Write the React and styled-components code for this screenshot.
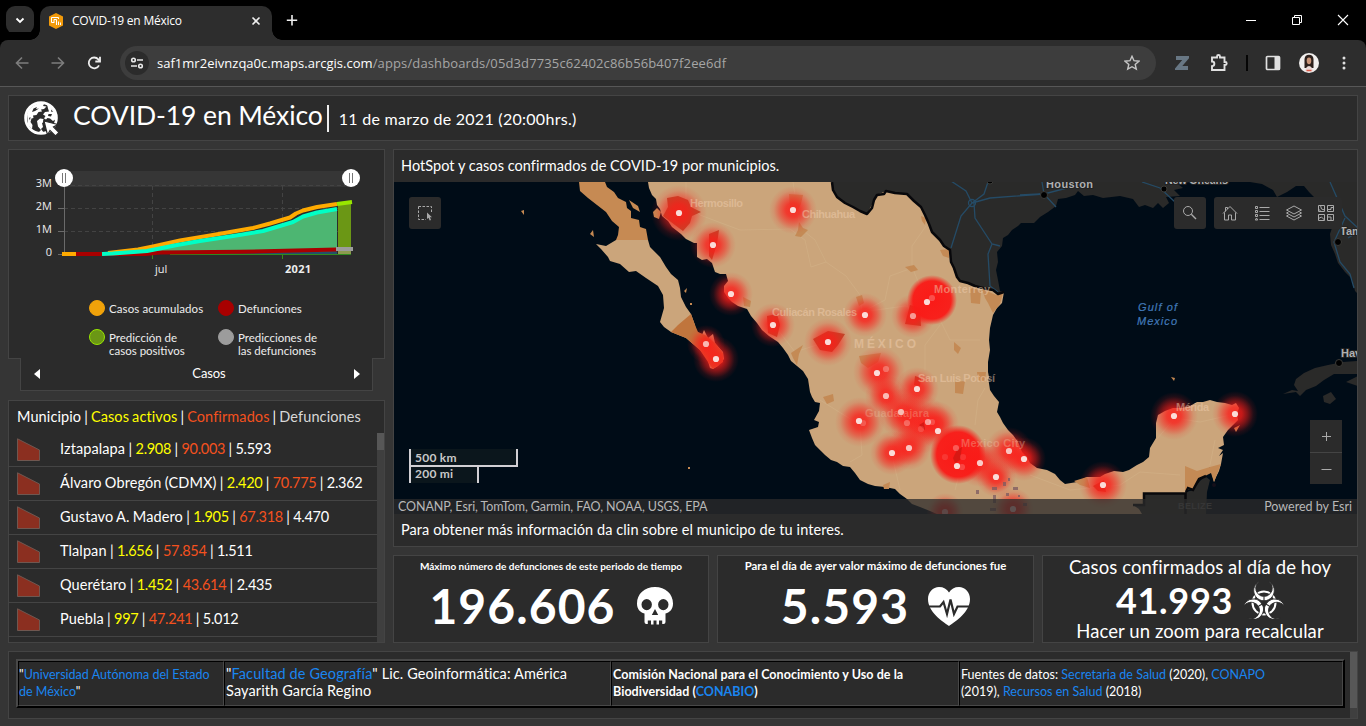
import React from 'react';
import styled, { createGlobalStyle } from 'styled-components';

const Global = createGlobalStyle`
  * { box-sizing: border-box; }
  html, body { margin: 0; padding: 0; background: #353535; overflow: hidden; }
  body { font-family: Lato, "Open Sans", sans-serif; color: #fff; }
  svg { display: block; flex: none; }
`;

const ui = '"Open Sans", "Noto Sans", sans-serif';
const line = '#444';
const panelBg = '#2b2b2b';

const Window = styled.div`
  width: 1366px;
  height: 726px;
  display: flex;
  flex-direction: column;
  background: #353535;
`;

/* ---------- browser chrome ---------- */
const TabStrip = styled.div`
  height: 40px;
  flex: none;
  background: #000;
  display: flex;
  align-items: flex-start;
  padding: 6px 0 0 6px;
`;
const TabSearch = styled.div`
  width: 28px;
  height: 28px;
  border-radius: 9px;
  background: #2d2d2d;
  display: grid;
  place-items: center;
`;
const Tab = styled.div`
  position: relative;
  margin-left: 6px;
  width: 232px;
  height: 34px;
  border-radius: 10px 10px 0 0;
  background: #2d2d2d;
  display: flex;
  align-items: center;
  padding: 0 10px 5px 8px;
  font: 12px/18px ${ui};
  letter-spacing: -0.22px;
  &::before, &::after {
    content: '';
    position: absolute;
    bottom: 0;
    width: 10px;
    height: 10px;
  }
  &::before { left: -10px; background: radial-gradient(circle at 0 0, transparent 9.5px, #2d2d2d 10px); }
  &::after { right: -10px; background: radial-gradient(circle at 100% 0, transparent 9.5px, #2d2d2d 10px); }
`;
const TabTitle = styled.span`
  flex: 1;
  margin-left: 8px;
`;
const NewTab = styled.div`
  margin: 6px 0 0 12px;
`;
const WindowButtons = styled.div`
  margin-left: auto;
  display: flex;
  gap: 34px;
  padding: 8px 17px 0 0;
`;
const Toolbar = styled.div`
  height: 47px;
  flex: none;
  background: #2d2d2d;
  border-bottom: 1px solid #575757;
  border-radius: 8px 8px 0 0;
  display: flex;
  align-items: center;
  padding: 0 14px 0 15px;
  box-shadow: 0 -8px 0 #000;
`;
const NavIcons = styled.div`
  display: flex;
  gap: 22px;
  width: 105px;
`;
const AddressBar = styled.div`
  width: 1036px;
  height: 34px;
  border-radius: 17px;
  background: #3d3d3d;
  display: flex;
  align-items: center;
  padding: 0 16px 0 5px;
  font: 13px/20px ${ui};
`;
const SiteInfo = styled.div`
  width: 24px;
  height: 24px;
  border-radius: 50%;
  background: #2b2b2b;
  display: grid;
  place-items: center;
  margin-right: 8px;
`;
const Url = styled.span`
  flex: 1;
  color: #a6a6a6;
  letter-spacing: ${p => p.$ls}px;
  b { font-weight: 400; color: #fff; letter-spacing: 0.02px; }
`;
const ToolbarActions = styled.div`
  display: flex;
  align-items: center;
  justify-content: space-between;
  flex: 1;
  margin-left: 19px;
`;
const Divider = styled.div`
  width: 2px;
  height: 16px;
  background: #050505;
`;

/* ---------- dashboard ---------- */
const Dashboard = styled.main`
  flex: 1;
  min-height: 0;
  padding: 8px 8px 7px;
  display: flex;
  flex-direction: column;
  gap: 8px;
`;
const Panel = styled.section`
  background: ${panelBg};
  border: 1px solid ${line};
`;
const Header = styled(Panel)`
  height: 46px;
  display: flex;
  align-items: center;
  padding-left: 15px;
`;
const Title = styled.h1`
  margin: 0 0 2px 14px;
  font-weight: 400;
  font-size: 26.5px;
  line-height: 36px;
  letter-spacing: ${p => p.$ls}px;
  display: flex;
  align-items: baseline;
`;
const Caret = styled.span`
  width: 2px;
  height: 27px;
  background: #eee;
  align-self: center;
  margin: 2px 10px 0 4px;
`;
const DateText = styled.span`
  font-size: 16px;
  letter-spacing: ${p => p.$ls}px;
`;
const Body = styled.div`
  flex: none;
  height: 494px;
  display: grid;
  grid-template-columns: 377px 965px;
  gap: 8px;
`;
const Left = styled.div`
  display: flex;
  flex-direction: column;
  min-height: 0;
`;
const ChartPanel = styled(Panel)`
  height: 210px;
`;
const ChartTabs = styled.div`
  margin: -1px 12px 0;
  height: 33px;
  background: ${panelBg};
  border: 1px solid ${line};
  border-top: 0;
  display: flex;
  align-items: center;
  justify-content: space-between;
  padding: 0 12px 2px 13px;
  font-size: 13px;
  letter-spacing: -0.1px;
  > svg { margin-top: 2px; }
  > span { margin-left: 24px; }
`;
const Legend = styled.div`
  display: grid;
  grid-template-columns: 129px 120px;
  grid-auto-rows: 29px;
  margin: 3px 0 0 80px;
`;
const LegendItem = styled.div`
  display: flex;
  gap: 4px;
  font-size: 11.5px;
  line-height: 13px;
  white-space: pre-line;
  letter-spacing: ${p => p.$ls || 0}px;
  color: #eee;
  > span { padding-top: 2px; }
`;
const Dot = styled.i`
  width: 16px;
  height: 16px;
  flex: none;
  border-radius: 50%;
  background: ${p => p.$c};
  border: 1px solid ${p => p.$b || p.$c};
`;
const ListPanel = styled(Panel)`
  margin-top: 9px;
  height: 243px;
  overflow: hidden;
`;
const ListHead = styled.div`
  height: 32px;
  line-height: 31px;
  padding-left: 8px;
  font-size: 14.5px;
  white-space: nowrap;
  letter-spacing: 0.1px;
  word-spacing: -0.8px;
`;
const ListBody = styled.div`
  display: flex;
  height: 209px;
`;
const Rows = styled.div`
  flex: 1;
  min-width: 0;
  overflow: hidden;
`;
const Row = styled.div`
  height: 34px;
  border-bottom: 1px solid ${line};
  display: flex;
  align-items: center;
  padding: 0 0 2px 8px;
  font-size: 14.5px;
  white-space: nowrap;
  letter-spacing: 0.1px;
  word-spacing: -0.5px;
  svg { margin: 2px 20px 0 0; }
`;
const Mark = styled.span`
  color: ${p => p.$c};
`;
const Num = styled(Mark)`
  letter-spacing: -0.3px;
`;
const ScrollTrack = styled.div`
  width: 7px;
  background: #3f3f3f;
`;
const ScrollThumb = styled.div`
  height: ${p => p.$h}px;
  background: #575757;
`;

const Right = styled.div`
  display: flex;
  flex-direction: column;
  gap: 8px;
`;
const MapPanel = styled(Panel)`
  height: 398px;
`;
const MapCaption = styled.div`
  height: 32px;
  line-height: 31px;
  padding-left: 7px;
  font-size: 14.5px;
  letter-spacing: ${p => p.$ls}px;
`;
const MapView = styled.div`
  position: relative;
  height: 332px;
  overflow: hidden;
  background: #000c17;
`;
const MapButtons = styled.div`
  position: absolute;
  top: 15px;
  ${p => (p.$left !== undefined ? `left: ${p.$left}px;` : `right: ${p.$right}px;`)}
  height: 32px;
  display: flex;
  border-radius: 3px;
  background: #2b2b2b;
`;
const MapButton = styled.div`
  width: 32px;
  height: 32px;
  display: grid;
  place-items: center;
`;
const ZoomControl = styled.div`
  position: absolute;
  right: 15px;
  bottom: 30px;
  background: #2b2b2b;
  > div + div { border-top: 1px solid #444; }
`;
const ScaleBar = styled.div`
  position: absolute;
  left: 15px;
  bottom: 31px;
  font-size: 12px;
  font-weight: 700;
  letter-spacing: 0.25px;
  color: #c8c8c8;
`;
const ScaleLine = styled.div`
  width: ${p => p.$w}px;
  height: ${p => p.$h}px;
  line-height: 17px;
  padding-left: 4px;
  background: #0b161c;
  border: 2px solid #d2d0d4;
  border-top: 0;
  ${p => p.$last && 'border-bottom: 0; line-height: 14px;'}
`;
const Attribution = styled.div`
  position: absolute;
  left: 0;
  right: 0;
  bottom: 0;
  height: 15px;
  line-height: 15px;
  padding: 0 5px 0 4px;
  display: flex;
  justify-content: space-between;
  font-size: 12.5px;
  color: #b8b8b8;
  background: rgba(43, 43, 43, 0.76);
  > span:first-child { letter-spacing: -0.09px; }
`;
const Indicators = styled.div`
  display: grid;
  grid-template-columns: 316px 317px 316px;
  gap: 8px;
  height: 88px;
`;
const Indicator = styled(Panel)`
  display: flex;
  flex-direction: column;
  align-items: center;
  white-space: nowrap;
`;
const SmallTitle = styled.div`
  height: 19px;
  line-height: 20px;
  font-size: ${p => p.$size}px;
  font-weight: 700;
`;
const BigTitle = styled.div`
  height: ${p => p.$h}px;
  line-height: ${p => p.$h}px;
  font-size: 18.5px;
  letter-spacing: 0.08px;
`;
const Value = styled.div`
  display: flex;
  align-items: center;
  gap: ${p => p.$gap}px;
  height: ${p => p.$h}px;
  font-size: ${p => p.$size}px;
  line-height: 1;
  font-weight: 700;
  letter-spacing: ${p => p.$ls}px;
`;

const Footer = styled(Panel)`
  height: 68px;
  display: flex;
  justify-content: space-between;
`;
const Credits = styled.div`
  margin: 7px 0 0 7px;
  width: 1329px;
  height: 49px;
  border: 2px solid;
  border-color: #484848 #000 #000 #484848;
  display: grid;
  grid-template-columns: 206px 387px 348px 384px;
`;
const Credit = styled.div`
  border: 1px solid;
  border-color: #000 #484848 #484848 #000;
  padding: ${p => p.$top || 4}px 0 0 ${p => p.$left || 0}px;
  font-size: ${p => p.$size || 12.5}px;
  font-weight: ${p => (p.$bold ? 700 : 400)};
  line-height: 17px;
  white-space: pre;
  letter-spacing: ${p => p.$ls || 0}px;
`;
const Link = styled.a`
  color: #1a85f0;
`;

/* ---------- icons ---------- */
const S = ({ w = 16, h = w, vb, c = '#d6d6d6', sw = 1.5, children }) => (
  <svg width={w} height={h} viewBox={vb || `0 0 ${w} ${h}`} fill="none" stroke={c} strokeWidth={sw}>{children}</svg>
);

const Globe = () => (
  <svg width="35" height="35" viewBox="0 0 35 35">
    <circle cx="17" cy="17" r="15.4" fill="none" stroke="#fff" strokeWidth="2.800" />
    <g fill="#fff">
      <path d="M3 13 C5 7 10 3 16 2.500 L20 3 L19 5 L22.500 5.500 L20 8 L17 8.500 L18 10.500 L14.500 11 L12.500 14 L9 14.500 L9.500 17 L7.500 17.500 L6.500 21 L8.500 24 L8 28 L4 24 Z" />
      <path d="M23 3 L27 6 L31 12 L32 18 L29 20 L26 17.500 L23.500 17 L22 18.500 L20 17.500 L21.500 15 L19 13.500 L21 11 L25 10.500 L24 7.500 Z" />
      <path d="M13 20 L16 17.500 L19.500 18 L19 21.500 L18 22 L19 26 L17 28 L20 32 L14 32 L17 29 L14 25.500 Z" />
    </g>
    <path d="M9.500 7.500 L13 6 L12 8 L15 7.500 L11 10 L8 11 Z M5 17 L6.500 16 L6 19.500 Z M24.500 13 L28 13 L27 15.500 L24 15 Z M27.500 8.500 L29 11 L27 10.500 Z" fill="#2b2b2b" />
    <path d="M20 20 L34 23.500 L29.500 26 L35 31.500 L31.500 35 L26 29.400 L23.500 34 Z" fill="#fff" stroke="#2b2b2b" strokeWidth="1.200" />
  </svg>
);

const Skull = () => (
  <svg width="36" height="38" viewBox="0 0 36 38">
    <path fill="#fff" fillRule="evenodd" d="M18 0 C28.500 0 36 7 36 16.500 C36 22 33 25.500 28.500 26.500 L28.500 35 Q28.500 37 26.500 37 L25.200 37 L25.200 33.500 L22 33.500 L22 37.500 L19.500 37.500 L19.500 33.500 L16.500 33.500 L16.500 37.500 L14 37.500 L14 33.500 L10.800 33.500 L10.800 37 L9.500 37 Q7.500 37 7.500 35 L7.500 26.500 C3 25.500 0 22 0 16.500 C0 7 7.500 0 18 0 Z M9.700 12 A5.200 5.600 0 1 0 9.700 23.200 A5.200 5.600 0 1 0 9.700 12 Z M26.300 12 A5.200 5.600 0 1 0 26.300 23.200 A5.200 5.600 0 1 0 26.300 12 Z M18 22 L14.800 28 L21.200 28 Z" />
  </svg>
);

const HeartPulse = () => (
  <svg width="42" height="39" viewBox="0 0 42 39">
    <path fill="#fff" d="M21 39 C14 34 0 25 0 12 C0 5 5 0 11 0 C15.500 0 19 2 21 5.500 C23 2 26.500 0 31 0 C37 0 42 5 42 12 C42 25 28 34 21 39 Z" />
    <path d="M0 19.500 H12 L15.500 15 L19 27 L22.500 12.500 L26 27 L29.500 19.500 H42" fill="none" stroke="#2b2b2b" strokeWidth="2.200" />
  </svg>
);

const Biohazard = () => (
  <svg width="40" height="38" viewBox="0 0 40 38">
    <circle cx="20" cy="22" r="11.500" fill="none" stroke="#fff" strokeWidth="2" />
    {[0, 120, 240].map(a => (
      <path
        key={a}
        transform={`rotate(${a} 20 22)`}
        d="M15 0.500 A10.300 10.300 0 1 0 25 0.500 A8.300 8.300 0 1 1 15 0.500 Z"
        fill="#fff"
        stroke="#2b2b2b"
        strokeWidth="0.900"
      />
    ))}
    <circle cx="20" cy="22" r="2.300" fill="#2b2b2b" />
    {[0, 120, 240].map(a => (
      <path key={a} transform={`rotate(${a} 20 22)`} d="M20 22V16" stroke="#2b2b2b" strokeWidth="1.100" />
    ))}
  </svg>
);

/* ---------- chart ---------- */
const Chart = () => (
  <svg width="375" height="147" viewBox="9 150 375 147" fontFamily="Open Sans, sans-serif" fontSize="11" fill="#eee">
    <rect x="64" y="171" width="287" height="16" fill="#363636" />
    <g stroke="#434343" strokeDasharray="4 3">
      <path d="M64 185.500H351M64 208.500H351M64 231.500H351M152.500 186V254M282.500 186V254" />
    </g>
    <path d="M64.500 186V254M58 208.500H65M58 231.500H65M58 254.500H65" stroke="#6a6a6a" fill="none" />
    <path d="M152.500 254V259M282.500 254V259" stroke="#3a8a1a" />
    <path d="M102 254 L113 253 L147 251 L177 245 L200 241 L233 236 L263 231 L293 222 L310 214 L337 209 V254 Z" fill="#4db672" />
    <path d="M338 204 L351 202 V254 H338 Z" fill="#6b9715" />
    <path d="M338 249 H351 V254 H338 Z" fill="#8c9a4f" />
    <path d="M190 254 L263 252.500 L337 251 V254.500 H190Z" fill="#24506a" />
    <path d="M170 254.500 H351" stroke="#2f8a1e" />
    <g fill="none" strokeWidth="4" strokeLinejoin="round">
      <path d="M62 254 H78" stroke="#ffaa00" />
      <path d="M108 253 L138 249.500 L153 246.500 L180 240.500 L213 235 L253 228 L270 223.500 L290 217.500 L296 213.500 L303 210.500 L317 207 L337 204" stroke="#ffaa00" />
      <path d="M76 254 H145 L160 252.500 L240 251.800 L337 249.500" stroke="#a80000" />
      <path d="M102 254 L113 253.500 L147 251 L177 245 L200 241 L233 236 L263 231 L293 222 L303 216.500 L317 212.500 L337 209" stroke="#00ffc5" />
      <path d="M337 204 L352 202" stroke="#98e600" />
      <path d="M336 249 H353" stroke="#9c9c9c" />
    </g>
    <g textAnchor="end">
      <text x="52" y="187">3M</text>
      <text x="52" y="210">2M</text>
      <text x="52" y="233">1M</text>
      <text x="52" y="256">0</text>
    </g>
    <text x="155" y="273">jul</text>
    <text x="285" y="273" fontWeight="700" textLength="26">2021</text>
    {[64, 351].map(x => (
      <g key={x}>
        <circle cx={x} cy="178" r="9" fill="#fff" />
        <path d={`M${x - 1.5} 173V183M${x + 1.5} 173V183`} stroke="#777" />
      </g>
    ))}
  </svg>
);

/* ---------- map ---------- */
const usBorder = '832 182 L833 190 L837 197 L845 203 L853 207 L860 211 L867 214 L872 208 L874 200 L877 195 L884 194 L886 191 L895 193 L907 194 L914 201 L921 207 L925 215 L929 224 L932 232 L940 240 L944 246 L950 250 L951 262 L954 268 L957 277 L960 281 L968 283 L975 286 L987 289 L993 290 L998 294 L1004 292';
const mainland = 'M648 182 L649 188 L652 195 L656 199 L657 205 L660 209 L662 216 L668 221 L672 227 L681 234 L686 239 L694 243 L697 243 L697 257 L702 260 L707 259 L712 263 L715 272 L720 274 L726 274 L728 281 L724 286 L724 292 L728 298 L732 302 L738 306 L747 309 L751 316 L757 323 L762 330 L769 336 L778 342 L783 348 L788 355 L791 361 L797 366 L803 371 L808 379 L810 392 L812 397 L815 402 L820 403 L819 411 L814 420 L819 422 L818 427 L809 430 L812 438 L815 445 L821 451 L825 455 L831 460 L837 462 L843 466 L850 467 L855 473 L860 480 L868 484 L875 486 L885 487 L895 489 L900 494 L907 499 L912 504 L920 507 L930 511 L937 514 L1142 514 L1139 509 L1133 505 L1144 505 L1144 493 L1185 493 L1187 488 L1193 490 L1197 484 L1199 478 L1205 476 L1210 467 L1212 474 L1214 482 L1216 477 L1219 471 L1221 464 L1223 453 L1219 456 L1223 450 L1218 448 L1224 445 L1223 437 L1228 430 L1233 425 L1238 420 L1237 414 L1239 408 L1236 403 L1232 405 L1225 403 L1217 402 L1210 400 L1203 402 L1197 402 L1190 406 L1182 408 L1173 408 L1165 411 L1158 415 L1156 423 L1156 438 L1150 448 L1149 457 L1143 462 L1137 465 L1129 470 L1123 472 L1114 471 L1105 474 L1100 477 L1087 477 L1077 482 L1065 484 L1060 480 L1055 474 L1047 470 L1037 468 L1030 463 L1027 457 L1022 452 L1018 442 L1013 435 L1008 430 L1003 423 L1000 417 L997 412 L999 402 L994 396 L990 390 L988 377 L990 382 L988 372 L988 362 L990 350 L989 340 L990 328 L993 315 L997 308 L1002 303 L1004 292 L998 294 L993 290 L975 286 L960 281 L957 277 L951 262 L950 250 L944 246 L932 232 L929 224 L921 207 L907 194 L886 191 L877 195 L867 214 L845 203 L837 197 L833 190 L832 182 Z';

const spots = [
  [679, 213, 28], [713, 245, 23], [793, 210, 24], [731, 294, 22], [773, 325, 22], [828, 342, 24],
  [865, 315, 22], [913, 316, 22], [706, 344, 19], [716, 359, 23], [879, 372, 26], [917, 389, 22],
  [886, 396, 21], [903, 413, 25], [920, 424, 30], [936, 424, 23], [860, 422, 25], [892, 453, 22], [909, 448, 22],
  [980, 463, 24], [1009, 451, 24], [1024, 459, 22], [996, 477, 20], [1013, 509, 21], [945, 512, 19],
  [1174, 416, 24], [1235, 414, 23], [1103, 485, 24],
];
const dots = [
  [679, 213], [713, 245], [793, 210], [731, 294], [773, 325], [828, 342], [865, 315], [913, 316, 0.6], [927, 302],
  [932, 298, 0.25], [706, 344, 0.75], [716, 359], [877, 373], [886, 369, 0.3], [917, 389], [886, 396, 0.75],
  [901, 412, 0.75], [907, 423, 0.3], [921, 429, 0.15], [928, 422, 0.6], [932, 422, 0.2], [938, 431], [859, 421],
  [863, 423, 0.2], [956, 448, 0.3], [945, 457, 0.12], [963, 457, 0.12], [957, 466], [962, 467, 0.2], [980, 463, 0.85],
  [892, 453], [909, 448, 0.8], [1009, 451, 0.8], [1024, 459], [996, 477], [1013, 509, 0.8], [945, 512, 0.6],
  [1174, 416], [1235, 414], [1103, 485],
];

const MapDrawing = () => (
  <svg width="963" height="332" viewBox="394 182 963 332" fontFamily="Liberation Sans, Arial, sans-serif">
    <defs>
      <radialGradient id="heat">
        <stop offset="0" stopColor="#fb1d19" stopOpacity="0.88" />
        <stop offset="0.3" stopColor="#fb1d19" stopOpacity="0.78" />
        <stop offset="0.55" stopColor="#fb1d19" stopOpacity="0.48" />
        <stop offset="0.8" stopColor="#fb1d19" stopOpacity="0.13" />
        <stop offset="1" stopColor="#fb1d19" stopOpacity="0" />
      </radialGradient>
      <radialGradient id="core">
        <stop offset="0" stopColor="#fa1a17" />
        <stop offset="0.76" stopColor="#fa1a17" stopOpacity="0.95" />
        <stop offset="1" stopColor="#fa1a17" stopOpacity="0" />
      </radialGradient>
    </defs>
    {/* neighbouring countries */}
    <g fill="#2a2a29">
      <path d={`M${usBorder} L1000 291 L998 280 L996 270 L998 262 L997 252 L1002 246 L1003 238 L1008 235 L1012 230 L1018 226 L1021 223 L1034 223 L1040 217 L1048 212 L1056 206 L1058 199 L1066 198 L1075 195 L1078 191 L1084 196 L1093 195 L1103 198 L1120 196 L1133 199 L1139 207 L1145 205 L1153 208 L1158 203 L1163 208 L1169 203 L1166 197 L1180 196 L1174 190 L1183 188 L1178 184 L1190 182 Z`} />
      <path d="M1250 182 L1262 184 L1273 190 L1277 197 L1287 192 L1296 186 L1304 186 L1309 192 L1316 199 L1330 208 L1334 222 L1330 234 L1331 245 L1335 254 L1338 263 L1345 272 L1352 279 L1355 291 L1358 294 V182 Z" />
      <path d="M1283 394 L1292 390 L1298 391 L1294 385 L1296 379 L1304 373 L1315 368 L1328 365 L1343 362 L1358 361 V374 L1342 374 L1334 374 L1324 380 L1316 386 L1306 390 L1300 396 L1296 392 Z M1346 382 L1358 376 V386 Z M1323 396 L1331 392 L1336 399 L1330 404 L1324 402 Z" />
      <path d="M1133 505 L1144 505 L1144 493 L1187 492 L1193 490 L1200 481 L1205 476 L1210 480 L1207 492 L1206 514 L1142 514 Z" />
    </g>
    <g fill="none" stroke="#254b66" strokeWidth="1.300">
      <path d="M951 181 L966 191 L972 203 L984 194 L988 182 M972 203 L990 198 L1044 194 L1090 182 M972 203 L961 216 L951 248 M974 203 L975 218 L992 244 L1000 246 M992 244 L988 254 L990 286 L998 292 M1042 182 L1044 194 L1056 207 M1142 182 L1160 188 L1175 202 M1330 182 L1345 216 L1358 228 M1345 218 L1334 242 L1340 262 L1350 274 L1354 288 M1020 195 L1040 194 M1348 238 L1358 232" />
      <circle cx="972" cy="203" r="3.500" />
    </g>

    {/* Mexico */}
    <path d="M648 240 L616 240 L606 246 L596 244 L601 249 L608 257 L610 261 L620 264 L629 272 L636 271 L646 278 L658 286 L663 295 L664 308 L660 322 L664 327 L671 332 L686 338 L700 350 L707 358 L710 368 L713 369 L718 366 L724 359 L723 352 L715 343 L713 334 L708 338 L704 330 L702 335 L696 331 L695 325 L691 314 L686 307 L681 297 L680 288 L678 280 L671 274 L666 267 L660 257 L650 247 Z" fill="#cba57b" />
    <path d="M579 182 L580 191 L588 198 L597 205 L606 212 L612 221 L619 227 L618 235 L616 240 H648 L646 229 L640 227 L639 220 L631 218 L631 211 L627 208 L626 202 L618 198 L614 192 L607 187 L605 182 Z" fill="#c68a53" />
    <path d="M629 200 L638 206 L640 212 L633 208 Z M653 212 L657 208 L661 212 L659 219 L654 217Z M590 234 L593 230 L594 237 Z M521 211 L524 210 L524 215Z M684 291 L687 288 L686 293Z M690 303 H692V305H690Z M1171 377 L1175 378 L1174 381Z M1234 428 L1240 425 L1236 432Z M688 467H690V469H688Z" fill="#c68a53" />
    <path d="M671 332 L678 325 L691 314 L695 325 L698 332 L705 335 L715 343 L723 353 L723 362 L713 369 L708 362 L700 350 L686 338 Z" fill="#c0753d" />
    <path d={mainland} fill="#cba57b" />
    <g fill="none" stroke="#d3b38a" strokeWidth="1" opacity="0.5">
      <path d="M686 182 V200 L700 215 L740 230 L790 229 L805 240 L811 267 L826 262 L815 240 L800 228 L793 182 M826 262 L846 276 L860 295 L862 312 L905 306 L928 312 M930 310 L912 267 L912 246 L926 226 M862 312 L885 300 L890 276 L912 268 M832 340 L795 352 L778 330 M940 320 L950 340 L980 340 M925 370 L925 345 L940 325 M860 425 L820 400 M860 425 L862 455 L850 462 M900 490 L892 455 L920 450 M960 470 L955 490 M975 425 L978 400 L985 388 M1030 475 L1070 490 L1120 485 L1140 472 L1180 475 M1156 440 L1175 418 L1200 422 L1235 414 M1210 465 L1215 440" />
    </g>
    <g fill="#c48a55">
      <path d="M789 194 L803 195 L801 204 L797 212 L790 208 Z M799 222 L803 228 L808 230 L801 237 L795 236 L798 230 Z M905 267 L914 265 L918 270 L911 272 Z M921 216 L926 218 L925 225 L922 221Z M940 250 L949 249 L949 258 L943 256Z M970 287 L981 291 L980 304 L971 303Z M982 289 L996 295 L1003 293 L1000 304 L993 313 L988 303 L985 298Z M954 342 L961 348 L958 354 L954 350Z M791 353 L803 345 L799 354 L797 365 L793 358Z M743 297 L751 301 L750 307 L744 306Z M856 297 L862 295 L864 303 L859 306Z M859 356 L881 353 L878 362 L868 368 L861 363Z M955 382 L965 381 L963 394 L955 393Z M977 372 L986 372 L985 382 L978 380Z M823 397 L833 394 L834 401 L827 404Z M883 485 L890 482 L889 489 L884 489Z M1074 481 L1087 477 L1090 488 L1080 485Z M1185 466 L1197 471 L1210 467 L1221 464 L1214 482 L1211 473 L1205 476 L1199 478 L1193 490 L1185 490Z" />
    </g>
    <g fill="#b0502c">
      <path d="M667 198 L678 196 L688 200 L691 207 L701 212 L692 216 L690 223 L683 231 L675 225 L663 216 L668 207Z M709 234 L719 230 L717 244 L712 260 L709 256Z M813 339 L828 331 L845 334 L838 345 L832 352 L820 350Z M767 316 L777 314 L780 325 L777 337 L768 333Z M910 305 L920 308 L921 326 L905 324Z M915 376 L921 378 L920 386 L914 385Z M1093 486 L1104 480 L1106 492 L1098 491Z" />
    </g>
    <path d={`M${usBorder}`} fill="none" stroke="#08080b" strokeWidth="2.500" strokeLinejoin="round" />
    <path d="M1133 505 L1144 505 V493.500 H1185.500 V514 M1186 492 L1188 488 L1193 490 L1199 479 L1206 476" fill="none" stroke="#08080b" strokeWidth="2.500" />
    <circle cx="1214" cy="485" r="2" fill="#15101a" />

    {spots.map(([x, y, r]) => <circle key={`${x}-${y}`} cx={x} cy={y} r={r} fill="url(#heat)" />)}
    <circle cx="932" cy="300" r="25" fill="url(#core)" />
    <rect x="930" y="425" width="56" height="59" rx="27" fill="url(#core)" />
    <path d="M953 458 L957 450 L962 447 L960 460 L955 463Z M919 425 L924 422 L925 430Z" fill="#d81813" />
    <g fill="#7b5a60" opacity="0.75">
      <path d="M976 490h3v4h-3z M992 487h5v3h-5z M1003 482h3v4h-3z M1013 487h5v3h-5z M993 495h3v8h-3z M1006 493h3v3h-3z M1018 495h2v2h-2z M1023 503h4v3h-4z M990 508h6v3h-6z M1008 478h2v3h-2z" />
    </g>
    {dots.map(([x, y, o = 0.93], i) => <circle key={i} cx={x} cy={y} r="3.100" fill="#fbeae6" fillOpacity={o} />)}

    {/* place names */}
    <g fill="#efcdae" fillOpacity="0.5" fontSize="11" fontWeight="700">
      <text x="690" y="207" textLength="53">Hermosillo</text>
      <text x="802" y="218" textLength="53">Chihuahua</text>
      <text x="934" y="293" textLength="56">Monterrey</text>
      <text x="772" y="316" textLength="85">Culiacán Rosales</text>
      <text x="854" y="348" fontSize="12" textLength="62">MÉXICO</text>
      <text x="918" y="382" textLength="77">San Luis Potosí</text>
      <text x="865" y="417" textLength="64" fillOpacity="0.3">Guadalajara</text>
      <text x="961" y="447" textLength="64" fillOpacity="0.35">Mexico City</text>
      <text x="1176" y="411" textLength="33">Mérida</text>
    </g>
    <text x="1178" y="509" fontSize="9" fontWeight="700" fill="#59595a" textLength="34">BELIZE</text>
    <g fill="#aeb0b1" fontSize="11" fontWeight="700" stroke="#222" strokeWidth="2" paintOrder="stroke">
      <text x="1046" y="188" textLength="47">Houston</text>
      <text x="1165" y="184" textLength="63">New Orleans</text>
      <text x="1340" y="235">Tampa</text>
      <text x="1341" y="357">Havana</text>
    </g>
    <g fill="#000" stroke="#3b3b38" strokeWidth="1">
      <circle cx="1044" cy="195" r="3.500" /><circle cx="1164" cy="189" r="3" /><circle cx="1338" cy="242" r="3.500" /><circle cx="1339" cy="363" r="3.500" /><circle cx="990" cy="181" r="3" />
    </g>
    <g fill="#4179b8" fontSize="11" fontStyle="italic" stroke="#4179b8" strokeWidth="0.200">
      <text x="1138" y="311" textLength="39">Gulf of</text>
      <text x="1137" y="325" textLength="40">Mexico</text>
    </g>
  </svg>
);

const rows = [
  ['Iztapalapa', '2.908', '90.003', '5.593'],
  ['Álvaro Obregón (CDMX)', '2.420', '70.775', '2.362'],
  ['Gustavo A. Madero', '1.905', '67.318', '4.470'],
  ['Tlalpan', '1.656', '57.854', '1.511'],
  ['Querétaro', '1.452', '43.614', '2.435'],
  ['Puebla', '997', '47.241', '5.012'],
];
const yellow = '#ffff00';
const orange = '#f4511e';

export default function App() {
  return (
    <Window>
      <Global />
      <TabStrip>
        <TabSearch><S w={10} c="#fff" sw={1.8}><path d="M1.500 3.500 L5 7 L8.500 3.500" /></S></TabSearch>
        <Tab>
          <svg width="16" height="16" viewBox="0 0 16 16">
            <path d="M8 0 L15 3.500 V12.500 L8 16 L1 12.500 V3.500Z" fill="#f29a0a" />
            <path d="M10.500 6 V4.500 H3.500 V9.500 H6.500 M6 6.500 H8.500 V12 M6 6.500 V9 M10.500 8.500 V12 M12.500 9.500 V12" fill="none" stroke="#fff" />
          </svg>
          <TabTitle>COVID-19 en México</TabTitle>
          <S w={12} c="#eee" sw={1.6}><path d="M2.500 2.500 L9.500 9.500 M9.500 2.500 L2.500 9.500" /></S>
        </Tab>
        <NewTab><S w={16} c="#eee" sw={1.6}><path d="M8 3V13.500M2.800 8.200H13.200" /></S></NewTab>
        <WindowButtons>
          <S w={12} c="#fff" sw={1}><path d="M1 6.500H11" /></S>
          <S w={12} c="#fff" sw={1}><path d="M1.500 3.500H8.500V10.500H1.500ZM3.500 3.500V1.500H10.500V8.500H8.500" /></S>
          <S w={12} c="#fff" sw={1.1}><path d="M1 1L11 11M11 1L1 11" /></S>
        </WindowButtons>
      </TabStrip>
      <Toolbar>
        <NavIcons>
          <S w={14} c="#7d7d7d" sw={1.6}><path d="M13.500 7H1.500M7 1.500L1.500 7L7 12.500" /></S>
          <S w={14} c="#7d7d7d" sw={1.6}><path d="M.5 7H12.500M7 1.500L12.500 7L7 12.500" /></S>
          <S w={14} c="#eee" sw={1.8}><path d="M12 9.300A5.400 5.400 0 1 1 11.300 3.400L12.600 5" /><path d="M13 .8V5.500H8.300" /></S>
        </NavIcons>
        <AddressBar>
          <SiteInfo><S w={14} c="#e8e8e8" sw={1.6}><circle cx="3.500" cy="4" r="1.800" /><path d="M7 4H13M1 10H7" /><circle cx="10.500" cy="10" r="1.800" /></S></SiteInfo>
          <Url $ls={0.13}><b>saf1mr2eivnzqa0c.maps.arcgis.com</b>/apps/dashboards/05d3d7735c62402c86b56b407f2ee6df</Url>
          <S w={16} c="#c7c7c7" sw={1.4}><path d="M8 1.300L10 5.700L14.900 6.200L11.200 9.400L12.300 14.200L8 11.700L3.700 14.200L4.800 9.400L1.100 6.200L6 5.700Z" /></S>
        </AddressBar>
        <ToolbarActions>
          <S w={14} h={16} c="#687784" sw={4}><path d="M1 3H11.500L3 13H13" /></S>
          <S w={22} h={18} vb="-4 0 22 18" c="#e0e0e0" sw={1.9}><path d="M2 3.500H7V2.500A1.500 1.500 0 0 1 10 2.500V3.500H14.500V8H15.200A1.500 1.500 0 0 1 15.200 11H14.500V16H2V12.200A2.300 2.300 0 0 0 2 7.500Z" /></S>
          <Divider />
          <S w={16} c="#e0e0e0" sw={1.7}><rect x="1.500" y="1.500" width="13" height="13" rx="1" /><rect x="9.500" y="2" width="5" height="12" fill="#e0e0e0" stroke="none" /></S>
          <svg width="20" height="20" viewBox="0 0 20 20">
            <circle cx="10" cy="10" r="10" fill="#f1efee" />
            <path d="M5.500 15 V6 Q6 1.800 10 1.800 Q14 1.800 14.500 6 V15Z" fill="#2c201c" />
            <ellipse cx="10" cy="7.800" rx="2.300" ry="3.400" fill="#c99478" />
            <path d="M6 18.500 Q6.500 13.500 10 13 Q13.500 13.500 14 18.500Z" fill="#e9d9d6" />
            <path d="M7.500 17.500H12.500" stroke="#dc5b48" strokeWidth="1.500" />
          </svg>
          <svg width="16" height="16" viewBox="0 0 16 16" fill="#e0e0e0"><circle cx="8" cy="3" r="1.500" /><circle cx="8" cy="8" r="1.500" /><circle cx="8" cy="13" r="1.500" /></svg>
        </ToolbarActions>
      </Toolbar>

      <Dashboard>
        <Header>
          <Globe />
          <Title $ls={-0.1}>COVID-19 en México<Caret /><DateText $ls={0.28}>11 de marzo de 2021 (20:00hrs.)</DateText></Title>
        </Header>

        <Body>
          <Left>
            <ChartPanel>
              <Chart />
              <Legend>
                <LegendItem $ls={0.1}><Dot $c="#f0a20a" /><span>Casos acumulados</span></LegendItem>
                <LegendItem><Dot $c="#a80000" /><span>Defunciones</span></LegendItem>
                <LegendItem><Dot $c="#6b9715" $b="#98e600" /><span>{'Predicción de\ncasos positivos'}</span></LegendItem>
                <LegendItem><Dot $c="#9c9c9c" /><span>{'Predicciones de\nlas defunciones'}</span></LegendItem>
              </Legend>
            </ChartPanel>
            <ChartTabs>
              <svg width="6" height="10"><path d="M6 0V10L0 5Z" fill="#fff" /></svg>
              <span>Casos</span>
              <svg width="6" height="10"><path d="M0 0V10L6 5Z" fill="#fff" /></svg>
            </ChartTabs>
            <ListPanel>
              <ListHead>
                Municipio | <Mark $c={yellow}>Casos activos</Mark> | <Mark $c={orange}>Confirmados</Mark> | <Mark $c="#d8d8d8">Defunciones</Mark>
              </ListHead>
              <ListBody>
                <Rows>
                  {rows.map(([name, active, confirmed, deaths]) => (
                    <Row key={name}>
                      <svg width="23" height="23" viewBox="0 0 23 23"><path d="M.5 .8 L22.500 12 V22.500 H.5Z" fill="#8b2f20" stroke="#6f5750" /></svg>
                      <span>{name} | <Num $c={yellow}>{active}</Num> | <Num $c={orange}>{confirmed}</Num> | <Num $c="#fff">{deaths}</Num></span>
                    </Row>
                  ))}
                </Rows>
                <ScrollTrack><ScrollThumb $h={17} /></ScrollTrack>
              </ListBody>
            </ListPanel>
          </Left>

          <Right>
            <MapPanel>
              <MapCaption $ls={0.04}>HotSpot y casos confirmados de COVID-19 por municipios.</MapCaption>
              <MapView>
                <MapDrawing />
                <MapButtons $left={15}>
                  <MapButton><S w={16} c="#aaa" sw={1}><path d="M1.500 1.500H14.500V8M1.500 1.500V14.500H9" strokeDasharray="2.500 1.500" /><path d="M10 7.500V14L11.500 12.800L12.700 15.500L14 15L12.900 12.300H15Z" fill="#aaa" stroke="none" /></S></MapButton>
                </MapButtons>
                <MapButtons $right={151}>
                  <MapButton><S w={16} c="#aaa" sw={1}><circle cx="6" cy="6" r="4.500" /><path d="M9.300 9.300L14 14" strokeWidth="1.400" /></S></MapButton>
                </MapButtons>
                <MapButtons $right={15}>
                  <MapButton><S w={16} c="#aaa" sw={1}><path d="M1 8.500L8 1.500L15 8.500M3.500 6.500V2.500H5.500V4M2.500 7.500V15H6.500V10H9.500V15H13.500V7.500" /></S></MapButton>
                  <MapButton><S w={16} c="#aaa" sw={1}><path d="M5.500 2.500H15.500M5.500 6.500H15.500M5.500 10.500H15.500M5.500 14.500H15.500" /><path d="M1.500 1.500H3.500V3.500H1.500ZM1.500 5.500H3.500V7.500H1.500ZM1.500 9.500H3.500V11.500H1.500ZM1.300 15L2.500 13L3.700 15Z" /></S></MapButton>
                  <MapButton><S w={16} c="#aaa" sw={1}><path d="M8 1L15.500 5L8 9L.5 5ZM2.500 7L.5 8L8 12L15.500 8L13.500 7M2.500 10L.5 11L8 15L15.500 11L13.500 10" /></S></MapButton>
                  <MapButton><S w={17} c="#aaa" sw={1}><path d="M.5 .5H6.500V6.500H.5ZM9.500 .5H15.500V6.500H9.500ZM.5 9.500H6.500V15.500H.5ZM9.500 9.500H15.500V15.500H9.500ZM2.500 .5L3.500 4L6.500 5M.5 4L3 6.500M9.500 4.500H13V2.500H15.500M.5 13.500L3.500 12L6.500 15M9.500 12H13V15.500" /></S></MapButton>
                </MapButtons>
                <ZoomControl>
                  <MapButton><S w={16} c="#aaa" sw={1}><path d="M8.500 4V13M4 8.500H13" /></S></MapButton>
                  <MapButton><S w={16} c="#aaa" sw={1}><path d="M3.500 8.500H13.500" /></S></MapButton>
                </ZoomControl>
                <ScaleBar>
                  <ScaleLine $w={109} $h={18}>500 km</ScaleLine>
                  <ScaleLine $w={70} $h={16} $last>200 mi</ScaleLine>
                </ScaleBar>
                <Attribution>
                  <span>CONANP, Esri, TomTom, Garmin, FAO, NOAA, USGS, EPA</span>
                  <span>Powered by Esri</span>
                </Attribution>
              </MapView>
              <MapCaption $ls={0.08}>Para obtener más información da clin sobre el municipo de tu interes.</MapCaption>
            </MapPanel>

            <Indicators>
              <Indicator>
                <SmallTitle $size={10}>Máximo número de defunciones de este periodo de tiempo</SmallTitle>
                <Value $h={62} $size={48} $gap={21} $ls={1.1}>196.606<Skull /></Value>
              </Indicator>
              <Indicator>
                <SmallTitle $size={11.4}>Para el día de ayer valor máximo de defunciones fue</SmallTitle>
                <Value $h={62} $size={48} $gap={19} $ls={1.1}>5.593<HeartPulse /></Value>
              </Indicator>
              <Indicator>
                <BigTitle $h={22}>Casos confirmados al día de hoy</BigTitle>
                <Value $h={43} $size={36} $gap={11} $ls={0.7}>41.993<Biohazard /></Value>
                <BigTitle $h={20}>Hacer un zoom para recalcular</BigTitle>
              </Indicator>
            </Indicators>
          </Right>
        </Body>

        <Footer>
          <Credits>
            <Credit $ls={0.02}>"<Link>Universidad Autónoma del Estado</Link>{'\n'}<Link>de México</Link>"</Credit>
            <Credit $size={14.5} $top={3} $left={1} $ls={0.12}>"<Link>Facultad de Geografía</Link>" Lic. Geoinformática: América{'\n'}Sayarith García Regino</Credit>
            <Credit $bold $left={1} $ls={0.05}>Comisión Nacional para el Conocimiento y Uso de la{'\n'}Biodiversidad (<Link>CONABIO</Link>)</Credit>
            <Credit $left={1} $ls={0.02}>Fuentes de datos: <Link>Secretaria de Salud</Link> (2020), <Link>CONAPO</Link>{'\n'}(2019), <Link>Recursos en Salud</Link> (2018)</Credit>
          </Credits>
          <ScrollTrack><ScrollThumb $h={56} /></ScrollTrack>
        </Footer>
      </Dashboard>
    </Window>
  );
}
